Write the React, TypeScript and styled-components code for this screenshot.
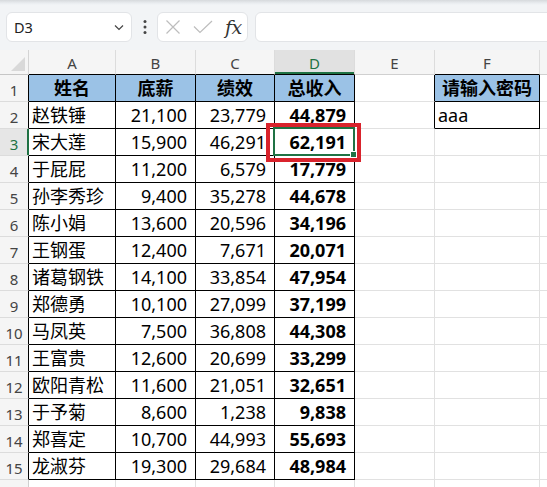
import React from "react";
import styled, { createGlobalStyle } from "styled-components";

const Global = createGlobalStyle`
  html, body { margin: 0; padding: 0; background: #fff; overflow: hidden; }
  body { width: 547px; height: 487px; font-family: "Noto Sans", "Noto Sans CJK SC", sans-serif; }
`;

const Page = styled.div`
  width: 547px;
  height: 487px;
  overflow: hidden;
  display: flex;
  flex-direction: column;
`;

const Toolbar = styled.div`
  height: 50px;
  flex: none;
  box-sizing: border-box;
  display: flex;
  align-items: flex-start;
  padding: 12px 0 0 6px;
  background: linear-gradient(#d6d9dc 0px, #e9ecef 3px, #f2f4f6 5px, #f2f4f6 100%);
`;

const NameBox = styled.div`
  width: 126px;
  height: 30px;
  box-sizing: border-box;
  flex: none;
  background: #fff;
  border: 1px solid #e2e4e7;
  border-radius: 6px;
  display: flex;
  align-items: center;
  justify-content: space-between;
  padding: 0 7px 0 7px;
  font-size: 14.5px;
  color: #222;
`;

const DotsSlot = styled.div`
  width: 25px;
  height: 30px;
  flex: none;
  display: flex;
  align-items: center;
  justify-content: center;
`;

const FxBox = styled.div`
  width: 91px;
  height: 30px;
  flex: none;
  box-sizing: border-box;
  background: #fff;
  border: 1px solid #e2e4e7;
  border-radius: 6px;
  display: flex;
  align-items: center;
  padding-left: 7px;
  gap: 12px;
`;

const FxText = styled.span`
  font-family: "DejaVu Serif", "Liberation Serif", serif;
  font-style: italic;
  font-size: 19px;
  color: #333;
  letter-spacing: -0.5px;
`;

const FormulaInput = styled.div`
  flex: 1;
  height: 30px;
  box-sizing: border-box;
  margin-left: 7px;
  margin-right: -12px;
  background: #fff;
  border: 1px solid #e2e4e7;
  border-radius: 6px;
`;

const Sheet = styled.div`
  display: grid;
  grid-template-columns: 29px 87px 80px 79px 80px 80px 105px 80px;
  grid-template-rows: 25px repeat(16, 27px);
  background: #fff;
`;

const Corner = styled.div`
  position: relative;
  background: #f5f5f5;
  border-right: 1px solid #d4d4d4;
  border-bottom: 1px solid #c6c6c6;
  box-sizing: border-box;
`;

const CornerTri = styled.svg`
  position: absolute;
  right: 3px;
  bottom: 3px;
`;

const ColHead = styled.div<{ $sel?: boolean; $dark?: boolean }>`
  box-sizing: border-box;
  background: ${(p) => (p.$sel ? "#e1e1e1" : "#f5f5f5")};
  border-right: 1px solid #dcdcdc;
  border-bottom: 1px solid ${(p) => (p.$dark ? "#000" : "#d0d0d0")};
  box-shadow: ${(p) => (p.$sel ? "inset 0 -2px 0 #1f7244" : "none")};
  color: ${(p) => (p.$sel ? "#1f7244" : "#444")};
  font-size: 15px;
  display: flex;
  align-items: center;
  justify-content: center;
  padding-top: 1px;
`;

const RowHead = styled.div<{ $sel?: boolean; $dark?: boolean }>`
  box-sizing: border-box;
  background: ${(p) => (p.$sel ? "#e6e6e6" : "#f5f5f5")};
  border-right: 1px solid ${(p) => (p.$sel ? "#1f7244" : p.$dark ? "#000" : "#d0d0d0")};
  box-shadow: ${(p) => (p.$sel ? "inset -1px 0 0 #1f7244" : "none")};
  border-bottom: 1px solid #dcdcdc;
  color: ${(p) => (p.$sel ? "#1f7244" : "#444")};
  font-size: 15px;
  display: flex;
  align-items: center;
  justify-content: center;
  padding-top: 4px;
`;

const Cell = styled.div<{
  $right?: boolean;
  $bottom?: boolean;
  $fill?: boolean;
  $bold?: boolean;
  $active?: boolean;
  $align: "left" | "right" | "center";
}>`
  position: relative;
  z-index: ${(p) => (p.$active ? 2 : "auto")};
  box-sizing: border-box;
  border-right: 1px solid ${(p) => (p.$right ? "#000" : "#e1e1e1")};
  border-bottom: 1px solid ${(p) => (p.$bottom ? "#000" : "#e1e1e1")};
  background: ${(p) => (p.$fill ? "#9bc2e6" : "#fff")};
  font-weight: ${(p) => (p.$bold ? 700 : 400)};
  font-size: 18px;
  line-height: 24px;
  color: #000;
  white-space: nowrap;
  display: flex;
  align-items: flex-end;
  justify-content: ${(p) =>
    p.$align === "left" ? "flex-start" : p.$align === "right" ? "flex-end" : "center"};
  padding: 0 ${(p) => (p.$align === "right" ? "8px" : "2px")} 1px
    ${(p) => (p.$align === "left" ? "3px" : "2px")};
`;

const Selection = styled.div`
  position: absolute;
  left: -2px;
  top: -2px;
  right: -1px;
  bottom: -1px;
  border: 2px solid #1f7244;
  pointer-events: none;
`;

const Handle = styled.div`
  position: absolute;
  right: -4px;
  bottom: -4px;
  width: 5px;
  height: 5px;
  background: #1f7244;
  border: 1px solid #fff;
`;

const RedMark = styled.div`
  position: absolute;
  left: -9px;
  top: -6px;
  width: 95px;
  height: 39px;
  box-sizing: border-box;
  border: 4px solid #d9232c;
  pointer-events: none;
`;

type Row = [string, string, string, string];

const rows: Row[] = [
  ["姓名", "底薪", "绩效", "总收入"],
  ["赵铁锤", "21,100", "23,779", "44,879"],
  ["宋大莲", "15,900", "46,291", "62,191"],
  ["于屁屁", "11,200", "6,579", "17,779"],
  ["孙李秀珍", "9,400", "35,278", "44,678"],
  ["陈小娟", "13,600", "20,596", "34,196"],
  ["王钢蛋", "12,400", "7,671", "20,071"],
  ["诸葛钢铁", "14,100", "33,854", "47,954"],
  ["郑德勇", "10,100", "27,099", "37,199"],
  ["马凤英", "7,500", "36,808", "44,308"],
  ["王富贵", "12,600", "20,699", "33,299"],
  ["欧阳青松", "11,600", "21,051", "32,651"],
  ["于予菊", "8,600", "1,238", "9,838"],
  ["郑喜定", "10,700", "44,993", "55,693"],
  ["龙淑芬", "19,300", "29,684", "48,984"],
];

const letters = ["A", "B", "C", "D", "E", "F", "G"];
const TOTAL_ROWS = 16;

const boxed = (r: number, c: number) =>
  (r >= 1 && r <= 15 && c >= 1 && c <= 4) || (c === 6 && (r === 1 || r === 2));

function cellContent(
  r: number,
  c: number
): { text: string; align: "left" | "right" | "center"; bold?: boolean; fill?: boolean } {
  if (r === 1) {
    if (c >= 1 && c <= 4) return { text: rows[0][c - 1], align: "center", bold: true, fill: true };
    if (c === 6) return { text: "请输入密码", align: "center", bold: true, fill: true };
    return { text: "", align: "left" };
  }
  if (r <= 15 && c >= 1 && c <= 4) {
    const v = rows[r - 1][c - 1];
    return { text: v, align: c === 1 ? "left" : "right", bold: c === 4 };
  }
  if (r === 2 && c === 6) return { text: "aaa", align: "left" };
  return { text: "", align: "left" };
}

export default function App() {
  return (
    <Page>
      <Global />
      <Toolbar>
        <NameBox>
          <span>D3</span>
          <svg width="10" height="7" viewBox="0 0 10 7">
            <path d="M1 1.5 L5 5.5 L9 1.5" fill="none" stroke="#444" strokeWidth="1.2" />
          </svg>
        </NameBox>
        <DotsSlot>
          <svg width="4" height="16" viewBox="0 0 4 16">
            <circle cx="2" cy="2.5" r="1.5" fill="#444" />
            <circle cx="2" cy="8" r="1.5" fill="#444" />
            <circle cx="2" cy="13.5" r="1.5" fill="#444" />
          </svg>
        </DotsSlot>
        <FxBox>
          <svg width="16" height="16" viewBox="0 0 16 16">
            <path d="M1.5 1.5 L14.5 14.5 M14.5 1.5 L1.5 14.5" stroke="#bdbdbd" strokeWidth="1.2" fill="none" />
          </svg>
          <svg width="20" height="14" viewBox="0 0 20 14">
            <path d="M1 6.5 L7 12.5 L19 1" stroke="#bdbdbd" strokeWidth="1.2" fill="none" />
          </svg>
          <FxText>fx</FxText>
        </FxBox>
        <FormulaInput />
      </Toolbar>
      <Sheet>
        <Corner>
          <CornerTri width="14" height="14" viewBox="0 0 14 14">
            <path d="M14 0 L14 14 L0 14 Z" fill="#d9d9d9" />
          </CornerTri>
        </Corner>
        {letters.map((l, i) => (
          <ColHead key={l} $sel={l === "D"} $dark={boxed(1, i + 1)}>
            {l}
          </ColHead>
        ))}
        {Array.from({ length: TOTAL_ROWS }, (_, ri) => {
          const r = ri + 1;
          return (
            <React.Fragment key={r}>
              <RowHead $sel={r === 3} $dark={boxed(r, 1)}>
                {r}
              </RowHead>
              {letters.map((_, ci) => {
                const c = ci + 1;
                const info = cellContent(r, c);
                const right = boxed(r, c) || boxed(r, c + 1);
                const bottom = boxed(r, c) || boxed(r + 1, c);
                const isActive = r === 3 && c === 4;
                return (
                  <Cell
                    key={c}
                    $right={right}
                    $bottom={bottom}
                    $fill={info.fill}
                    $bold={info.bold}
                    $active={isActive}
                    $align={info.align}
                  >
                    {info.text}
                    {isActive && (
                      <>
                        <Selection>
                          <Handle />
                        </Selection>
                        <RedMark />
                      </>
                    )}
                  </Cell>
                );
              })}
            </React.Fragment>
          );
        })}
      </Sheet>
    </Page>
  );
}
